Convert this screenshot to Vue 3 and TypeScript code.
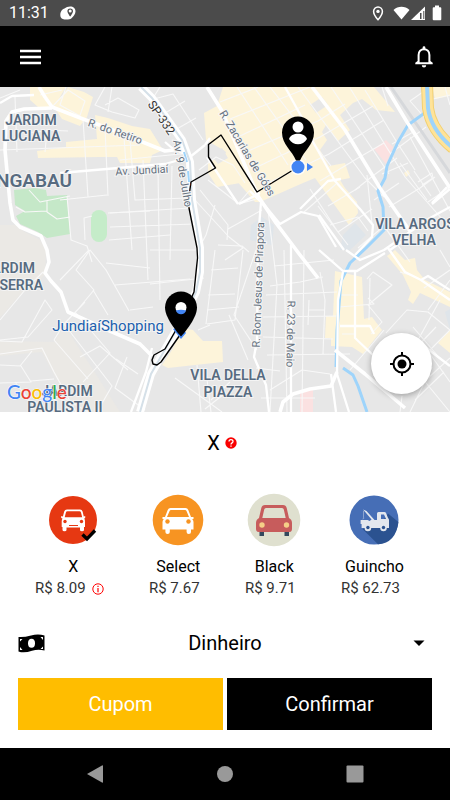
<script setup lang="ts">
import { ref } from 'vue'

interface Ride {
  id: string
  name: string
  price: string
  info?: boolean
}

const rides: Ride[] = [
  { id: 'x', name: 'X', price: 'R$ 8.09', info: true },
  { id: 'select', name: 'Select', price: 'R$ 7.67' },
  { id: 'black', name: 'Black', price: 'R$ 9.71' },
  { id: 'guincho', name: 'Guincho', price: 'R$ 62.73' },
]
const selected = ref('x')
const payment = ref('Dinheiro')

const thinRoads: string[] = [
  'M0 98L20 90M0 150L140 145M45 152L47 131L25 133M17 152L15 97M68 131L46 130M83 119L88 197M105 128L108 196M124 137L132 250M60 200L107 195M108 213L150 211M109 240L170 235M67 196L71 240L87 246L92 262M29 190L40 202L70 196M47 201L47 212L57 219L70 217M47 211L25 212L16 207M85 240L84 218L92 216',
  'M105 87L95 105L112 112L135 118L139 110L118 98L105 105M112 87L108 112M66 87L60 105L80 116M52 107L68 90L85 101L79 118M40 95L62 90',
  'M150 100L173 94L203 140M162 115L185 101M175 130L196 118M160 87L153 98M120 160L190 153M130 140L135 200L187 198M143 160L148 280M158 170L160 300M172 166L170 260M110 213L190 208M110 227L194 224M150 250L197 250',
  'M195 200L229 237L243 248L225 260M200 190L228 225L227 240M208 180L239 204L260 198M228 229L262 210M215 205L206 235L198 250M238 204L250 190M199 170L216 157L233 165L245 183',
  'M220 102L258 87M230 119L290 95L310 87M240 136L305 105M248 151L318 121L345 104M255 168L320 137L373 106M264 185L329 154L384 120M237 87L288 165M254 87L306 160M270 87L331 166M298 87L365 178L384 197M331 87L389 174M350 88L405 177L443 220M365 90L398 144L415 170M382 87L388 106M355 190L374 175L397 158',
  'M320 181L358 158L384 143M328 206L360 187M310 189L338 232M338 232L372 209M367 175L372 224M304 212L336 184M318 206L348 245M330 225L358 217L368 231M392 144L415 131M391 153L426 127M382 174L408 163M389 207L420 188L435 177M374 200L399 183M400 163L427 200M414 171L431 196M418 182L432 173L433 178L422 185',
  'M430 87L410 101L425 118M433 99L450 95M445 87L450 105M410 137L450 211M428 202L450 187M358 248L384 226L410 262M384 226L397 245',
  'M0 320L25 290L43 272M0 341L22 342L45 300L52 310L28 337L0 340M54 340L64 324L112 386L97 412M64 324L85 302M75 312L110 353L83 382M54 340L88 379M80 357L100 346L128 370M74 314L94 290L76 270L90 250L106 270L129 311M60 280L89 250M106 263L150 268M115 285L190 279M130 310L153 307M93 290L108 315',
  'M0 354L42 348L54 372L76 412M0 365L21 366L31 382L0 383M20 366L32 351M31 381L54 379M15 382L30 401M54 392L88 412M116 359L138 374M127 357L115 388L145 410',
  'M215 250L206 324M243 250L235 320L207 324M150 284L204 278M211 270L238 268M208 295L235 294M207 310L239 307M256 250L234 315L257 350M218 245L242 246L249 252M198 330L210 325M229 315L248 360M197 365L201 412M175 378L222 412M206 371L211 412M211 400L230 382M224 394L205 409',
  'M268 210L277 285L270 412M284 250L287 412M304 250L302 412M274 266L334 260M270 286L300 282L323 277M266 295L337 292M263 317L340 316M263 337L333 339M267 355L350 354M256 368L280 371M270 390L302 370L330 374M309 300L308 325M320 272L325 300L323 354M308 310L325 310M261 398L315 398',
  'M367 279L373 272L392 285L368 305L382 322L371 334M370 278L369 320M340 295L358 295M339 307L374 304L368 298M340 326L356 326M342 334L356 334M386 333L407 310L428 312L450 330M413 327L437 355M428 310L450 280M450 270L424 288M400 272L410 275M384 330L350 370M440 300L418 340M440 250L450 267M436 327L414 350M420 360L450 330M415 390L450 358M430 354L450 382M422 378L450 412M432 367L410 412M400 412L402 396M444 372L415 400',
]
const roads: string[] = [
  'M205 145L190 157L165 164L60 173',
  'M0 103L12 96L34 95M165 142L172 148L187 155M205 145L210 138',
  'M285 87L301 116L312 140L335 181L360 209L373 225L372 237L355 255',
  'M250 191L261 202L258 240L257 340L254 357L266 385L269 412',
  'M262 202L280 224L301 212L318 216L336 247',
  'M300 209L328 181L341 179M319 215L344 250',
  'M291 245L291 412M238 204L220 177L207 157M239 204L260 193',
  'M343 272L338 300L337 374L349 412M331 374L336 412M355 272L355 338L374 356M340 326L370 326L374 334',
  'M346 250L360 260L384 250L430 218L450 207M319 250L343 271L357 271L385 253M432 204L450 189M432 203L447 187',
  'M388 248L405 272L421 280L450 300M421 280L428 276L450 290',
  'M416 340L450 366M152 348L146 372L131 412M390 250L404 240',
]
const mainRoads: string[] = [
  'M39 87L45 97L52 107L83 119L105 127L150 145L165 151L182 149',
  'M52 108L24 109L12 112L6 121L5 150L10 203L13 220L20 227L41 236L47 250L49 262L45 273L51 281L61 292L68 312L110 331L140 344L152 356',
  'M207 87L222 111L258 196L276 223L300 255L318 278',
  'M312 87L345 130L380 188L400 217L410 231',
  'M386 87L407 122L450 188',
  'M335 350L365 374L405 408M280 412L283 402L293 394L310 389L331 386L337 372',
]
</script>

<template>
  <div class="screen">
    <div class="status">
      <div class="status-side">
        <span class="clock">11:31</span>
        <svg width="16" height="14" viewBox="0 0 16 14" aria-hidden="true">
          <path fill="#fff" d="M4.500 2.600C6 1.200 8 .5 10.200.5c3 0 5.300 1.700 5.300 4.700 0 3-2 5-3.500 6.600-1 1.200-2 1.600-4 1.600H4.500C2 13.400.3 11.700.3 9.300.3 5.500 2.500 3 4.500 2.600z" />
          <path fill="#4b4b4b" d="M10.200 2.400a2.800 2.800 0 0 0-2.800 2.800c0 1.800 2.800 5.400 2.800 5.400s2.800-3.600 2.800-5.400a2.800 2.800 0 0 0-2.800-2.800z" />
          <circle cx="10.200" cy="5.100" r="1.500" fill="#fff" />
        </svg>
      </div>
      <div class="status-side right">
        <svg class="place" width="12" height="15" viewBox="0 0 12 15" aria-hidden="true">
          <path fill="none" stroke="#fff" stroke-width="1.500" d="M6 1a4.400 4.400 0 0 0-4.400 4.400C1.600 8.700 6 13.700 6 13.700s4.400-5 4.400-8.300A4.400 4.400 0 0 0 6 1z" />
          <circle cx="6" cy="5.400" r="1.700" fill="#fff" />
        </svg>
        <svg width="34" height="15" viewBox="0 0 34 15" aria-hidden="true">
          <path fill="#fff" d="M.5 4C5-.2 12-.2 16.500 4L8.500 13.500z" />
          <path fill="#fff" d="M32 .5V14H18z" />
          <path fill="#4b4b4b" d="M27 7h1.500v6H27zM30.300 5h1v8h-1z" />
        </svg>
        <svg width="10" height="16" viewBox="0 0 10 16" aria-hidden="true">
          <path fill="#fff" d="M3 .5h4v1.700h1.300q1 0 1 1v11q0 1-1 1H1.700q-1 0-1-1v-11q0-1 1-1H3z" />
        </svg>
      </div>
    </div>

    <header class="topbar">
      <button class="icon-btn" type="button" aria-label="Menu">
        <svg width="22" height="16" viewBox="0 0 22 16"><path stroke="#fff" stroke-width="2.400" d="M0 2h21M0 8h21M0 14h21" /></svg>
      </button>
      <button class="icon-btn" type="button" aria-label="Notificações">
        <svg width="18" height="22" viewBox="0 0 18 22">
          <path fill="none" stroke="#fff" stroke-width="2" d="M3.600 17.200V9c0-3.500 2.400-5.800 5.400-5.800s5.400 2.300 5.400 5.800v8.200" />
          <path fill="#fff" d="M7.600 3.500V1.700a1.400 1.400 0 0 1 2.800 0v1.800zM2.600 15l-2.300 1.800v1.500h17.400v-1.500L15.400 15l-1 1.200H3.600zM6.800 19.300h4.400a2.200 2.200 0 0 1-4.400 0z" />
        </svg>
      </button>
    </header>

    <main class="map">
      <svg class="map-canvas" viewBox="0 87 450 325" preserveAspectRatio="xMidYMid slice" role="img" aria-label="Mapa da rota">
        <rect y="87" width="450" height="325" fill="#e7e7e7" />
        <g fill="#ebe9e5">
          <path d="M0 225L15 225L25 232L40 240L46 250L45 275L20 295L0 318z" />
          <path d="M0 341L54 342L64 325L90 365L120 412L74 412L42 352L0 356z" />
        </g>
        <g fill="#fdf4da">
          <path d="M30 87L66 87L60 97L55 108L38 107L30 100z" />
          <path d="M68 87L84 92L93 97L87 117L80 126L62 119L54 107z" />
          <path d="M95 115L108 118L132 126L150 129L163 150L152 155L150 163L120 163L117 157L100 157L38 158L37 151L66 147L66 142L97 139z" />
          <path d="M223 87L374 87L395 112L376 110L362 99L353 103L340 115L350 130L338 141L326 125L322 132L327 140L320 150L329 166L345 163L350 178L340 180L345 188L357 202L358 213L349 225L328 196L315 178L303 183L260 202L255 202L236 180L240 176L225 151L206 140L204 113L217 106z" />
          <path d="M208 163L228 152L246 182L217 187L208 173z" />
          <path d="M335 271L362 277L364 319L372 317L382 330L363 354L352 347L331 346L331 338L325 338L326 316L333 316z" />
          <path d="M387 256L395 250L405 260L415 258L417 270L425 280L450 292L450 307L420 293L413 304L408 300L411 292L403 275z" />
          <path d="M438 343L450 330L450 353z" />
          <path d="M183 328L193 330L203 341L222 341L223 362L195 365L168 368L162 365L172 350z" />
          <path d="M432 87L450 87L450 96L435 99zM404 173l4-3 2 4-4 3z" />
        </g>
        <path fill="#e7e7e7" d="M211 155l11-7 6 10-10 6zM310 105l12-8 6 8-12 8z" />
        <path fill="#fbe1e1" d="M374 149L386 140L393 147L386 164zM300 392L313 390L313 412L300 412z" />
        <path fill="#dfe5ea" d="M343 235L355 223L366 235L350 250L340 250zM251 225L262 217L274 225L272 245L250 240zM445 312L450 309V330z" />
        <path fill="#c5e8c8" d="M14 190L35 188L46 190L47 196L67 195L70 234L47 238L38 232L20 224L16 216L25 211L15 205z" />
        <rect x="91" y="210" width="16" height="32" rx="8" fill="#c5ecc9" />
        <g fill="none" stroke="#f8f8f8" stroke-width="1.100" stroke-linejoin="round">
          <path v-for="road in thinRoads" :key="road" :d="road" />
        </g>
        <path fill="none" stroke="#d6d8db" stroke-width="3" d="M391 87L450 173" />
        <g fill="none" stroke="#9ed4fb" stroke-width="3" stroke-linejoin="round">
          <path d="M426 112L408 125L398 142L387 166L385 178L378 191L383 207L384 230L366 248L350 263L341 281L337 330L336 367" />
          <path d="M343 368L353 375L358 386L367 412" />
        </g>
        <g fill="none" stroke="#fff" stroke-width="2.300" stroke-linejoin="round">
          <path v-for="road in roads" :key="road" :d="road" />
        </g>
        <g fill="none" stroke="#fff" stroke-width="3.600" stroke-linejoin="round">
          <path v-for="road in mainRoads" :key="road" :d="road" />
        </g>
        <path fill="none" stroke="#fff" stroke-width="8" stroke-linejoin="round" d="M141 87L152 98L182 140L190 162L192 200L200 248L200 272L196 292L181 322L163 353L151 374L140 412" />
        <path fill="none" stroke="#d5e0e8" stroke-width="2" d="M141 87L152 98L182 140L190 162L192 200L200 248L200 272L196 292L181 322L163 353L151 374L140 412" />
        <path fill="none" stroke="#9ed4fb" stroke-width="2" d="M184 152l3 10M188 171l1 11" />
        <path fill="none" stroke="#f2d071" stroke-width="12" d="M427 84L428 108Q431 130 453 148" />
        <path fill="none" stroke="#ffe398" stroke-width="10" d="M427 84L428 108Q431 130 453 148" />
        <path fill="none" stroke="#9ed4fb" stroke-width="4" d="M427 84L428 108Q431 130 453 148" />
        <path fill="none" stroke="#000" stroke-width="1.400" stroke-linejoin="round" d="M298 167L257 192L221 135L208.500 144.500V157L215.500 168L191 182L188 203L197 248L197.500 258L194 292L180 323L165 349L154 355L152 360L153 364L157 365L161 362L180 335" />

        <g class="area">
          <text x="31" y="125">JARDIM</text>
          <text x="31" y="141">LUCIANA</text>
          <text x="34" y="187" class="large">NGABAÚ</text>
          <text x="35" y="273" class="edge">JARDIM</text>
          <text x="43" y="290" class="edge">DA SERRA</text>
          <text x="228" y="380">VILA DELLA</text>
          <text x="228" y="397">PIAZZA</text>
          <text x="415" y="229">VILA ARGOS</text>
          <text x="414" y="245">VELHA</text>
          <text x="67" y="396">JARDIM</text>
          <text x="65" y="412">PAULISTA II</text>
        </g>
        <g class="street">
          <text transform="translate(114 135) rotate(19)">R. do Retiro</text>
          <text transform="translate(142 174) rotate(-3)">Av. Jundiaí</text>
          <text class="highway" transform="translate(158 120) rotate(56)">SP-332</text>
          <text transform="translate(179 174) rotate(80)">Av. 9 de Julho</text>
          <text transform="translate(244 155) rotate(59)">R. Zacarias de Góes</text>
          <text transform="translate(262 285) rotate(-88)">R. Bom Jesus de Pirapora</text>
          <text transform="translate(287 334) rotate(91)">R. 23 de Maio</text>
        </g>
        <text class="poi" x="108" y="331">JundiaíShopping</text>

        <g fill="#4285f4">
          <circle cx="298" cy="167" r="8" fill="#fff" opacity=".8" />
          <circle cx="298" cy="167" r="6.500" />
          <path d="M307 163l6 4-6 4z" />
        </g>
        <path d="M298 116.500a16 16 0 0 0-16 16c0 12 10 18 14 28h4c4-10 14-16 14-28a16 16 0 0 0-16-16z" />
        <g fill="#fff">
          <circle cx="298" cy="127" r="5.500" />
          <path d="M289 139c2-7 16-7 18 0-4 7-14 7-18 0z" />
        </g>
        <path fill="#4285f4" d="M173 329l8 10 5-6-5-7z" />
        <path d="M181 291.500a16 16 0 0 0-16 16c0 12 16 29 16 29s16-17 16-29a16 16 0 0 0-16-16z" />
        <circle cx="181" cy="307.500" r="5.500" fill="#fff" />
        <path fill="#4285f4" d="M175.800 310.500q5.200-1.600 10.400 0a5.500 5.500 0 0 1-10.400 0z" />

        <text class="google" x="7" y="399"><tspan fill="#4285f4">G</tspan><tspan fill="#ea4335">o</tspan><tspan fill="#fbbc05">o</tspan><tspan fill="#4285f4">g</tspan><tspan fill="#34a853">l</tspan><tspan fill="#ea4335">e</tspan></text>
      </svg>
      <button class="locate" type="button" aria-label="Minha localização">
        <svg width="24" height="24" viewBox="0 0 24 24">
          <circle cx="12" cy="12" r="8.500" fill="none" stroke="#000" stroke-width="2" />
          <circle cx="12" cy="12" r="4.500" />
          <path stroke="#000" stroke-width="2" d="M12 0v4M12 20v4M0 12h4M20 12h4" />
        </svg>
      </button>
    </main>

    <section class="sheet">
      <div class="title">
        <h1>X</h1>
        <button class="help" type="button" aria-label="Ajuda">
          <svg width="12" height="12" viewBox="0 0 12 12">
            <circle cx="6" cy="6" r="5.700" fill="#f90000" />
            <path fill="none" stroke="#fff" stroke-width="1.300" d="M4 4.600C4 2 8 2 8 4.500 8 6 6 5.800 6 7.500M6 8.400v1.400" />
          </svg>
        </button>
      </div>

      <div class="rides" role="radiogroup" aria-label="Categoria">
        <label v-for="ride in rides" :key="ride.id" class="ride">
          <input v-model="selected" type="radio" name="ride" :value="ride.id" />
          <svg class="ride-icon" width="54" height="54" viewBox="0 0 54 54" aria-hidden="true">
            <g v-if="ride.id === 'x'">
              <circle cx="27" cy="27" r="24" fill="#e63812" />
              <path fill="#fff" fill-rule="evenodd" d="M21 16.500h13q2 0 2.600 2l1.200 5 1.400-.5v2l-1 .5q.8 1 .8 3v5.500h-1v3q0 1.300-2 1.300t-2-1.300v-2.500H20.500V37q0 1.300-2 1.300t-2-1.300v-3h-.8v-5.500q0-2 .8-3l-1.300-.5v-2l1.700.5 1.300-5q.6-2 2.800-2zM21.500 18.200q-1.300 0-1.600 1.200l-1.200 4.800h17.500L35 19.400q-.3-1.200-1.600-1.200z" />
              <g fill="#e63812"><circle cx="19" cy="28.500" r="1.700" /><circle cx="35.500" cy="28.500" r="1.700" /><path d="M23 32h9v1h-9z" /></g>
            </g>
            <g v-else-if="ride.id === 'select'">
              <circle cx="27" cy="27" r="25.300" fill="#f79422" />
              <path fill="#fff" fill-rule="evenodd" d="M19.500 15h15q2 0 2.800 2l2.700 7h2.500v2h-1.300q1.300 1.300 1.300 3v7.500H40V39q0 2-2.200 2t-2.200-2v-2.500H18.800V39q0 2-2.200 2t-2.200-2v-2.500h-2.900V29q0-1.700 1.300-3h-1.300v-2H14l2.700-7q.8-2 2.800-2zm.5 2q-1 0-1.400 1L16 24h22l-2.500-6q-.4-1-1.400-1z" />
              <g fill="#f79422"><circle cx="16.500" cy="28.500" r="2.200" /><circle cx="37.500" cy="28.500" r="2.200" /></g>
            </g>
            <g v-else-if="ride.id === 'black'">
              <circle cx="27" cy="27" r="26.300" fill="#dfe0cf" />
              <path fill="#c4c5b6" d="M10 36h34v3H10z" />
              <path fill="#34495e" d="M12.500 36H17v7h-4.500zM37.500 36H42v7h-4.500z" />
              <path fill="#c75c5c" fill-rule="evenodd" d="M18 12h18q3 0 3.700 3l2.300 10q3 1.500 3 5v6q0 3-3 3H12q-3 0-3-3v-6q0-3.500 3-5l2.300-10q.7-3 3.700-3zm1 3q-1.500 0-1.800 1.500L15.300 25h23.400l-1.900-8.500Q36.500 15 35 15z" />
              <g fill="#f5cf87"><circle cx="15" cy="32" r="2.700" /><circle cx="39.500" cy="32" r="2.700" /></g>
            </g>
            <g v-else>
              <circle cx="27" cy="27" r="24.500" fill="#466eb6" />
              <path fill="#2b5290" d="M15.500 36L31 51.300Q49 50 51.400 29L41 20.500l-5 7z" />
              <path fill="#e3e7ee" fill-rule="evenodd" d="M16 16.500l3.500 1.500 8 9H30v-6.500q0-1.500 1.500-1.500h6q1 0 1.500 1l2 5q1 1 1 2v8h-2.200a3.300 3.300 0 0 1-6.600 0h-9a3.300 3.300 0 0 1-6.600 0h-3V31h-1v-4h7l2 1 2-1.500-6-7z M34 21.500v4.500h5l-2-4.500z" />
              <g fill="#2b5290"><circle cx="20.900" cy="34.500" r="1.700" /><circle cx="36.500" cy="34.500" r="1.700" /></g>
              <path fill="none" stroke="#a9bad9" stroke-width=".7" d="M16.500 18v6q1 2-1 2" />
            </g>
            <path v-if="selected === ride.id" fill="none" stroke="#000" stroke-width="3.300" d="M36.500 41.500l4.500 4.500 8-8.500" />
          </svg>
          <span class="name">{{ ride.name }}</span>
          <span class="price">
            {{ ride.price }}
            <svg v-if="ride.info" width="12" height="12" viewBox="0 0 12 12" aria-hidden="true">
              <circle cx="6" cy="6" r="5.200" fill="none" stroke="#f00" />
              <path stroke="#f00" stroke-width="1.200" d="M6 2.700v1.300M6 5v4.200" />
            </svg>
          </span>
        </label>
      </div>

      <div class="payment">
        <svg class="cash" width="27" height="19" viewBox="0 0 27 19" aria-hidden="true">
          <path d="M.5 3Q6 3.500 13 1.500 20-.5 26.500 1.500V16.500Q20 15 14 16.800 6 19.500.5 17.500z" />
          <ellipse cx="13.500" cy="9.300" rx="3.500" ry="4.500" fill="#fff" />
          <path fill="#fff" d="M2 5h2.500L2 7.500zM25 3v3l-2.500-3zM2 13l2.500 3H2zM25 12.500V15h-2.500z" />
        </svg>
        <select v-model="payment" aria-label="Forma de pagamento">
          <option>Dinheiro</option>
        </select>
        <svg class="caret" width="12" height="6" viewBox="0 0 12 6" aria-hidden="true"><path d="M.5.500h11L6 6z" /></svg>
      </div>

      <div class="actions">
        <button class="coupon" type="button">Cupom</button>
        <button class="confirm" type="button">Confirmar</button>
      </div>
    </section>

    <nav class="system" aria-label="Sistema">
      <button type="button" aria-label="Voltar"><svg width="18" height="20" viewBox="0 0 18 20"><path d="M1 10L16 1.500q1-.5 1 .5v16q0 1-1 .5z" /></svg></button>
      <button type="button" aria-label="Início"><svg width="18" height="20" viewBox="0 0 18 20"><circle cx="9" cy="10" r="8" /></svg></button>
      <button type="button" aria-label="Recentes"><svg width="18" height="20" viewBox="0 0 18 20"><rect x=".5" y="1.500" width="17" height="17" rx="1" /></svg></button>
    </nav>
  </div>
</template>

<style>
body {
  margin: 0;
}
</style>

<style scoped>
.screen {
  display: flex;
  flex-direction: column;
  min-height: 100vh;
  background: #fff;
  color: #000;
  font-family: Roboto, "Liberation Sans", sans-serif;
}
button,
select {
  padding: 0;
  border: 0;
  background: transparent;
  color: inherit;
  font: inherit;
  cursor: pointer;
}
svg {
  display: block;
  flex: none;
}
.status {
  display: flex;
  align-items: center;
  justify-content: space-between;
  height: 26px;
  padding: 0 8px 0 9px;
  background: #4b4b4b;
  color: #fff;
}
.status-side {
  display: flex;
  align-items: center;
  gap: 11px;
}
.right {
  gap: 5px;
}
.place {
  margin-right: 4px;
}
.clock {
  font-size: 16px;
  line-height: 26px;
}
.topbar {
  display: flex;
  align-items: center;
  justify-content: space-between;
  height: 61px;
  padding: 0 17px 0 20px;
  background: #000;
}
.icon-btn {
  display: grid;
  place-items: center;
}
.map {
  position: relative;
  flex: 1 0 325px;
  overflow: hidden;
}
.map-canvas {
  position: absolute;
  inset: 0;
  width: 100%;
  height: 100%;
}
.area {
  fill: #576b80;
  stroke: #f4f4f4;
  stroke-width: 2px;
  paint-order: stroke;
  text-anchor: middle;
  font-size: 14px;
  font-weight: 600;
}
.large {
  font-size: 19px;
}
.edge {
  text-anchor: end;
}
.street {
  fill: #65717e;
  stroke: #f6f6f6;
  stroke-width: 2px;
  paint-order: stroke;
  text-anchor: middle;
  font-size: 11px;
}
.highway {
  fill: #333;
  font-size: 12px;
}
.poi {
  fill: #2060ae;
  stroke: #f4f4f4;
  stroke-width: 2px;
  paint-order: stroke;
  text-anchor: middle;
  font-size: 15px;
}
.google {
  font-family: Lato, sans-serif;
  font-size: 19px;
  font-weight: 500;
  stroke: #fff;
  stroke-width: 1px;
  paint-order: stroke;
}
.locate {
  position: absolute;
  right: 18px;
  bottom: 18px;
  display: grid;
  place-items: center;
  width: 61px;
  height: 61px;
  border-radius: 50%;
  background: #fff;
  box-shadow: 0 2px 6px rgba(0, 0, 0, 0.3);
}
.sheet {
  padding: 18px 18px;
}
.title {
  display: flex;
  align-items: center;
  justify-content: center;
  gap: 5px;
  padding-right: 6px;
}
h1 {
  margin: 0;
  font-size: 20px;
  font-weight: 400;
  line-height: 26px;
}
.rides {
  display: flex;
  justify-content: space-between;
  padding: 37px 24px 0 17px;
}
.ride {
  display: flex;
  flex-direction: column;
  align-items: center;
  font-size: 15px;
  line-height: 21px;
  cursor: pointer;
}
.ride input {
  position: absolute;
  opacity: 0;
  pointer-events: none;
}
.name {
  padding: 9px 0 1px;
  font-size: 16px;
}
.price {
  display: flex;
  align-items: center;
  gap: 6px;
  padding-right: 8px;
  color: #333;
  white-space: nowrap;
}
.payment {
  display: grid;
  grid-template-columns: auto 1fr auto;
  align-items: center;
  padding-top: 24px;
}
.payment select {
  grid-area: 1 / 1 / 2 / 4;
  height: 40px;
  width: 100%;
  appearance: none;
  font-size: 20px;
  text-align: center;
  text-align-last: center;
}
.cash,
.caret {
  z-index: 1;
  pointer-events: none;
}
.cash {
  grid-area: 1 / 1;
}
.caret {
  grid-area: 1 / 3;
  margin-right: 7px;
}
.actions {
  display: grid;
  grid-template-columns: 1fr 1fr;
  gap: 4px;
  padding-top: 15px;
}
.actions button {
  height: 52px;
  color: #fff;
  font-size: 20px;
}
.actions .coupon {
  background: #ffbd00;
}
.actions .confirm {
  background: #000;
}
.system {
  display: flex;
  align-items: center;
  justify-content: space-around;
  height: 52px;
  padding: 0 30px;
  background: #000;
}
.system svg {
  fill: #999;
}
</style>
